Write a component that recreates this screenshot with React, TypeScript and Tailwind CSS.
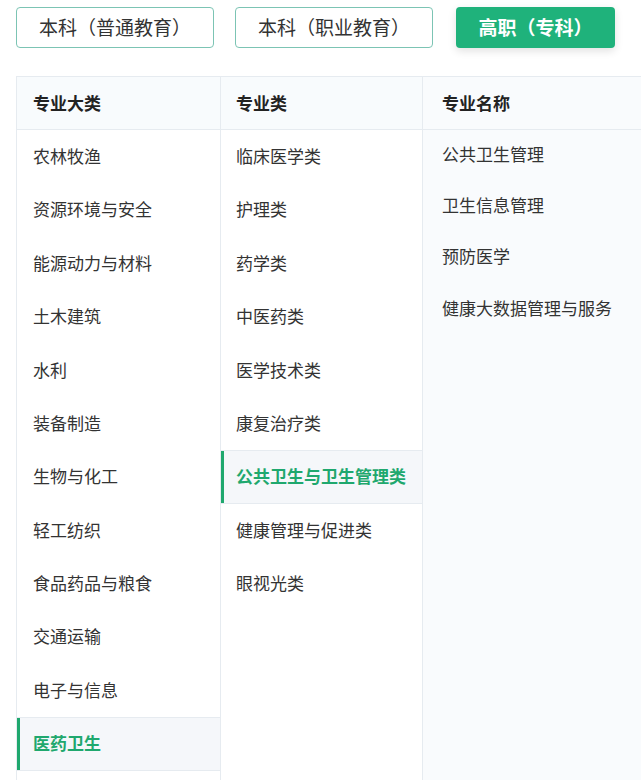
import React from 'react'

const bigCats = [
  '农林牧渔',
  '资源环境与安全',
  '能源动力与材料',
  '土木建筑',
  '水利',
  '装备制造',
  '生物与化工',
  '轻工纺织',
  '食品药品与粮食',
  '交通运输',
  '电子与信息',
  '医药卫生',
]

const subCats = [
  '临床医学类',
  '护理类',
  '药学类',
  '中医药类',
  '医学技术类',
  '康复治疗类',
  '公共卫生与卫生管理类',
  '健康管理与促进类',
  '眼视光类',
]

const majors = ['公共卫生管理', '卫生信息管理', '预防医学', '健康大数据管理与服务']

const font = { fontFamily: '"Noto Sans CJK SC", "Noto Sans", sans-serif' }

const App: React.FC = () => {
  return (
    <div className="flex h-[780px] flex-col overflow-hidden bg-white pl-4 text-[#333]" style={font}>
      <div className="flex pt-[7px]">
        <button className="flex h-[41px] w-[198px] items-center justify-center rounded border border-[#7cc4b4] bg-white text-[19px] text-[#333]">
          本科（普通教育）
        </button>
        <button className="ml-[21px] flex h-[41px] w-[198px] items-center justify-center rounded border border-[#7cc4b4] bg-white text-[19px] text-[#333]">
          本科（职业教育）
        </button>
        <button className="ml-[23px] flex h-[41px] w-[159px] items-center justify-center rounded bg-[#1fb27b] text-[19px] font-bold text-white shadow-[0_3px_8px_rgba(0,0,0,0.12)]">
          高职（专科）
        </button>
      </div>

      <div className="mt-[28px] flex flex-1 border-t border-l border-[#e6ebf0]">
        <div className="flex w-[204px] flex-col border-r border-[#e6ebf0]">
          <div className="flex h-[53px] items-center border-b border-[#e6ebf0] bg-[#f8fbfd] pb-[1px] pl-4 text-[17px] font-bold text-[#222]">
            专业大类
          </div>
          {bigCats.map((name) => {
            const active = name === '医药卫生'
            return (
              <div
                key={name}
                className={
                  active
                    ? 'flex h-[53.4px] shrink-0 items-center border-y border-[#e6ebf0] bg-[#f5f7fa] pb-[2px] pl-4 text-[17px] font-bold text-[#1fa86e] shadow-[inset_3px_0_0_#1fa86e]'
                    : 'flex h-[53.4px] shrink-0 items-center pb-[2px] pl-4 text-[17px]'
                }
              >
                {name}
              </div>
            )
          })}
        </div>

        <div className="flex w-[202px] flex-col border-r border-[#e6ebf0]">
          <div className="flex h-[53px] items-center border-b border-[#e6ebf0] bg-[#f8fbfd] pb-[1px] pl-[15px] text-[17px] font-bold text-[#222]">
            专业类
          </div>
          {subCats.map((name) => {
            const active = name === '公共卫生与卫生管理类'
            return (
              <div
                key={name}
                className={
                  active
                    ? 'flex h-[53.4px] shrink-0 items-center border-y border-[#e6ebf0] bg-[#f5f7fa] pb-[2px] pl-[15px] text-[17px] font-bold text-[#1fa86e] shadow-[inset_3px_0_0_#1fa86e]'
                    : 'flex h-[53.4px] shrink-0 items-center pb-[2px] pl-[15px] text-[17px]'
                }
              >
                {name}
              </div>
            )
          })}
        </div>

        <div className="flex flex-1 flex-col bg-[#f9fbfd]">
          <div className="flex h-[53px] items-center border-b border-[#e6ebf0] pb-[1px] pl-[19px] text-[17px] font-bold text-[#222]">
            专业名称
          </div>
          {majors.map((name) => (
            <div key={name} className="flex h-[51.3px] shrink-0 items-center pb-[4px] pl-[19px] text-[17px]">
              {name}
            </div>
          ))}
        </div>
      </div>
    </div>
  )
}

export default App
